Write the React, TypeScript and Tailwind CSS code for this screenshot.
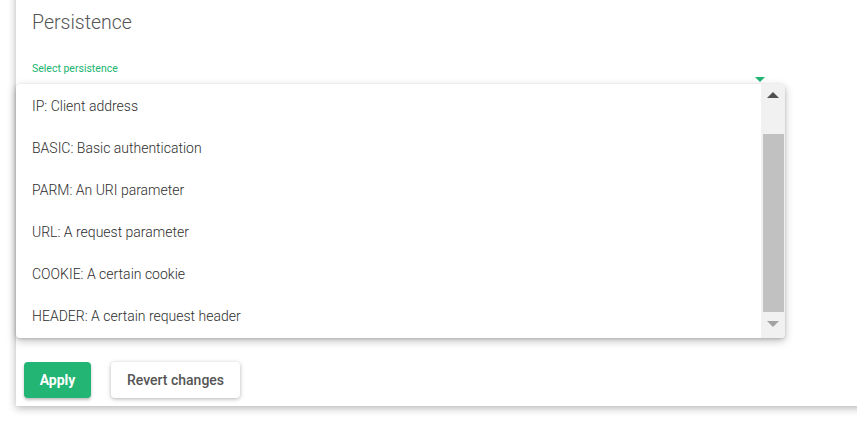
import React from "react";

const options = [
  "IP: Client address",
  "BASIC: Basic authentication",
  "PARM: An URI parameter",
  "URL: A request parameter",
  "COOKIE: A certain cookie",
  "HEADER: A certain request header",
];

function PersistenceMenu() {
  return (
    <div className="absolute left-4 top-[84px] flex h-[254px] w-[769px] overflow-hidden rounded-[4px] bg-white shadow-[0_3px_8px_rgba(0,0,0,0.25),0_1px_3px_rgba(0,0,0,0.15)]">
      <ul className="flex-1 pt-px">
        {options.map((option) => (
          <li
            className="flex h-[42px] items-center px-4 text-[14px] font-light text-[#2e2e2e]"
            key={option}
          >
            {option}
          </li>
        ))}
      </ul>
      <div className="flex w-[24px] flex-col bg-[#f1f1f1]">
        <div className="flex h-[50px] items-start justify-center pt-[8px]">
          <svg height="6" viewBox="0 0 12 6" width="12">
            <polygon fill="#505050" points="0,6 12,6 6,0" />
          </svg>
        </div>
        <div className="ml-[2px] h-[178px] w-[21px] bg-[#c1c1c1]" />
        <div className="flex flex-1 items-center justify-center pb-[2px]">
          <svg height="6" viewBox="0 0 12 6" width="12">
            <polygon fill="#a3a3a3" points="0,0 12,0 6,6" />
          </svg>
        </div>
      </div>
    </div>
  );
}

export default function App() {
  return (
    <div
      className="relative h-[431px] w-[857px] overflow-hidden bg-white"
      style={{ fontFamily: "Roboto, 'Liberation Sans', sans-serif" }}
    >
      <div className="ml-4 -mt-4 w-[880px] bg-white px-2 pb-2 pt-[25px] shadow-[0_2px_8px_rgba(0,0,0,0.3)]">
        <h2 className="px-2 text-[19.5px] font-light leading-[28px] text-[#555555]">
          Persistence
        </h2>
        <p className="mt-[26px] px-2 text-[10.5px] leading-[12px] text-[#20b472]">
          Select persistence
        </p>
        <div className="relative mx-2 h-[24px] w-[753px] border-b-2 border-[#20b472]">
          <svg
            className="absolute right-[20px] top-[2px]"
            height="6"
            viewBox="0 0 10 6"
            width="10"
          >
            <polygon fill="#20b472" points="0,0 10,0 5,5" />
          </svg>
        </div>
        <div className="h-[263px]" />
        <div className="flex gap-5">
          <button
            className="h-[36px] w-[67px] rounded-[4px] bg-[#22b573] text-[14px] font-bold text-white shadow-[0_2px_3px_rgba(0,0,0,0.25)]"
            type="button"
          >
            Apply
          </button>
          <button
            className="h-[36px] w-[129px] rounded-[4px] bg-white text-[14px] font-medium text-[#555555] shadow-[0_1px_4px_rgba(0,0,0,0.3)]"
            type="button"
          >
            Revert changes
          </button>
        </div>
      </div>
      <PersistenceMenu />
    </div>
  );
}
